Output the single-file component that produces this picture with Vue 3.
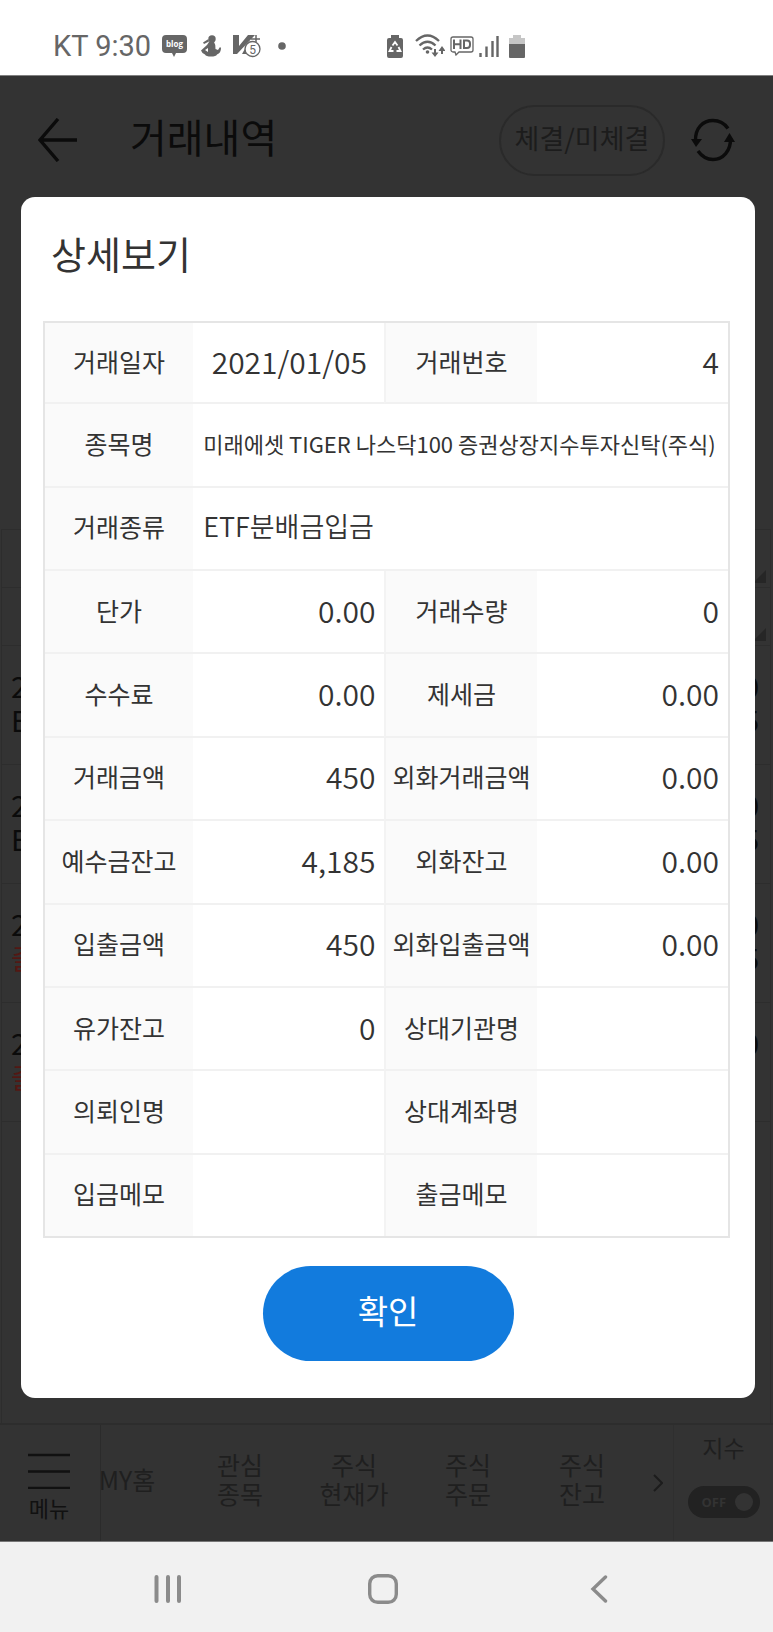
<script setup>
import { ref } from 'vue'

const rows = [
  [{ label: '거래일자', value: '2021/01/05', kind: 'date' }, { label: '거래번호', value: '4' }],
  [{ label: '종목명', value: '미래에셋 TIGER 나스닥100 증권상장지수투자신탁(주식)', kind: 'name' }],
  [{ label: '거래종류', value: 'ETF분배금입금', kind: 'type' }],
  [{ label: '단가', value: '0.00' }, { label: '거래수량', value: '0' }],
  [{ label: '수수료', value: '0.00' }, { label: '제세금', value: '0.00' }],
  [{ label: '거래금액', value: '450' }, { label: '외화거래금액', value: '0.00' }],
  [{ label: '예수금잔고', value: '4,185' }, { label: '외화잔고', value: '0.00' }],
  [{ label: '입출금액', value: '450' }, { label: '외화입출금액', value: '0.00' }],
  [{ label: '유가잔고', value: '0' }, { label: '상대기관명', value: '' }],
  [{ label: '의뢰인명', value: '' }, { label: '상대계좌명', value: '' }],
  [{ label: '입금메모', value: '' }, { label: '출금메모', value: '' }]
]

const history = [
  { left: ['2', 'E'], right: ['0', '5'] },
  { left: ['2', 'E'], right: ['0', '5'] },
  { left: ['2', '출'], right: ['0', '5'], withdrawal: true },
  { left: ['2', '출'], right: ['0', ''], withdrawal: true }
]

const tabs = [['MY홈'], ['관심', '종목'], ['주식', '현재가'], ['주식', '주문'], ['주식', '잔고']]
const indexOn = ref(false)
</script>

<template>
  <div class="phone">
    <header class="status">
      <div class="status-left">
        <span class="clock">KT 9:30</span>
        <svg class="i-blog" width="25" height="22" viewBox="0 0 25 22">
          <path d="M4 0h17a4 4 0 0 1 4 4v10a4 4 0 0 1-4 4h-7l-2 4-2-4H4a4 4 0 0 1-4-4V4a4 4 0 0 1 4-4z" fill="#666" />
          <text x="12.5" y="12" text-anchor="middle" font-family="Open Sans, sans-serif" font-weight="700" font-size="8" fill="#fff">blog</text>
        </svg>
        <svg class="i-person" width="20" height="22" viewBox="0 0 20 22">
          <circle cx="11" cy="4" r="3.7" fill="#666" />
          <path d="M7.500 4L2 7.500l1 1.500 5-2.500z" fill="#666" />
          <path d="M8 7h5q2 3 1.500 7l2.500 1 2-3 1 1q0 5-4 6.500-1 2-6 2-5 0-6-2-3-1-4-4l6-5.500z" fill="#666" />
          <path d="M4 15l3-2v4z" fill="#fff" />
        </svg>
        <svg class="i-vaccine" width="28" height="23" viewBox="0 0 28 23">
          <path d="M0 0h6v11L15 0h7L4 19H0z" fill="#666" />
          <path d="M9 19l4-7v7z" fill="#666" />
          <path d="M18 4h9M23 0v7" stroke="#666" stroke-width="1.5" />
          <circle cx="19.5" cy="14" r="7.5" fill="#fff" stroke="#666" stroke-width="1.3" />
          <text x="19.5" y="18.5" text-anchor="middle" font-family="Roboto, sans-serif" font-size="12" fill="#666">5</text>
        </svg>
        <svg width="8" height="8" viewBox="0 0 8 8"><circle cx="4" cy="4" r="3.8" fill="#666" /></svg>
      </div>
      <div class="status-right">
        <svg class="i-saver" width="16" height="23" viewBox="0 0 16 23">
          <path d="M4 0h8v3h2a2 2 0 0 1 2 2v16a2 2 0 0 1-2 2H2a2 2 0 0 1-2-2V5a2 2 0 0 1 2-2h2z" fill="#666" />
          <path d="M5.500 10.500L8 7l2.500 3.500M11.500 12l2 4h-4M6.500 16h-4l2-4" fill="none" stroke="#fff" stroke-width="1.800" />
        </svg>
        <svg class="i-wifi" width="30" height="24" viewBox="0 0 30 24">
          <g fill="none" stroke="#666" stroke-width="2.300">
            <path d="M1 7q11.500-11 23 0M4.500 11.500q8-7.500 16 0M8 15.500q4.500-4 9 0" />
            <path d="M20 15v6M27 20v-6" stroke-width="2" />
          </g>
          <circle cx="12.500" cy="18" r="1.800" fill="#666" />
          <path d="M16.500 18.500h7L20 23zM23.500 17h7L27 12z" fill="#666" />
        </svg>
        <svg class="i-hd" width="24" height="20" viewBox="0 0 24 20">
          <path d="M3 1h18a2 2 0 0 1 2 2v11a2 2 0 0 1-2 2H9l-3 3-1-3H3a2 2 0 0 1-2-2V3a2 2 0 0 1 2-2z" fill="none" stroke="#666" stroke-width="1.300" />
          <path d="M4 3.500v9.500M10.500 3.500v9.500M4 8.200h6.500M14 4.400h3q3 0 3 3v1.700q0 3-3 3h-3z" fill="none" stroke="#666" stroke-width="2" />
        </svg>
        <svg class="i-signal" width="20" height="22" viewBox="0 0 20 22">
          <path d="M1.500 22v-4M7.500 22V11.500M13.500 22V6M18.500 22V1" stroke="#666" stroke-width="2.400" />
        </svg>
        <svg width="16" height="23" viewBox="0 0 16 23">
          <path d="M4 0h8v3h4v7H0V3h4z" fill="#c6c6c6" />
          <path d="M0 9h16v13a1 1 0 0 1-1 1H1a1 1 0 0 1-1-1z" fill="#666" />
        </svg>
      </div>
    </header>

    <main class="app">
      <div class="topbar">
        <button class="icon-btn" aria-label="뒤로">
          <svg width="40" height="44" viewBox="0 0 40 44" fill="none" stroke="#0b0b0b" stroke-width="3.400">
            <path d="M20 1L2 22l18 21M2 22h37" />
          </svg>
        </button>
        <h1>거래내역</h1>
        <button class="pill">체결/미체결</button>
        <button class="icon-btn" aria-label="새로고침">
          <svg width="44" height="44" viewBox="0 0 44 44">
            <path d="M4.500 23C4 10 12 2.500 22 2.500q9.500 0 15 8M7 33q6 8.500 15 8.500C32 41.500 40 33 39.500 20" fill="none" stroke="#0b0b0b" stroke-width="3.400" />
            <path d="M0 21h11L5 29zM33 24h11L38.500 15z" fill="#0b0b0b" />
          </svg>
        </button>
      </div>

      <section class="list">
        <div class="head-row"><i class="corner"></i></div>
        <div class="head-row"><i class="corner"></i></div>
        <div v-for="(item, i) in history" :key="i" class="list-row" :class="{ red: item.withdrawal }">
          <div class="cell"><span>{{ item.left[0] }}</span><span class="second">{{ item.left[1] }}</span></div>
          <div class="cell"><span>{{ item.right[0] }}</span><span>{{ item.right[1] }}</span></div>
        </div>
      </section>

      <nav class="bottom">
        <button class="menu">
          <svg width="42" height="36" viewBox="0 0 42 36" stroke="#111" stroke-width="2.500"><path d="M0 2h42M0 18.500h42M0 35h42" /></svg>
          <span>메뉴</span>
        </button>
        <div class="strip">
          <a v-for="(tab, i) in tabs" :key="i" href="#" class="tab">
            <span v-for="line in tab" :key="line">{{ line }}</span>
          </a>
        </div>
        <button class="more" aria-label="더보기">
          <svg width="10" height="18" viewBox="0 0 10 18" fill="none" stroke="#1c1c1c" stroke-width="2"><path d="M1 1l8 8-8 8" /></svg>
        </button>
        <label class="index">
          <span>지수</span>
          <span class="track">
            <input v-model="indexOn" type="checkbox">
            <span>OFF</span><i class="knob"></i>
          </span>
        </label>
      </nav>

      <section class="modal" role="dialog" aria-labelledby="detail-title">
        <h2 id="detail-title">상세보기</h2>
        <div class="details">
          <table>
            <colgroup><col class="c-first"><col class="c-value"><col class="c-second"><col class="c-value"></colgroup>
            <tbody>
              <tr v-for="(row, r) in rows" :key="r">
                <template v-for="cell in row" :key="cell.label">
                  <th scope="row">{{ cell.label }}</th>
                  <td :class="cell.kind" :colspan="row.length === 1 ? 3 : 1">{{ cell.value }}</td>
                </template>
              </tr>
            </tbody>
          </table>
        </div>
        <button class="confirm">확인</button>
      </section>
    </main>

    <nav class="system">
      <button class="icon-btn" aria-label="최근 앱">
        <svg width="28" height="28" viewBox="0 0 28 28" stroke="#8b8b8b" stroke-width="4" stroke-linecap="round"><path d="M2.500 2v24M14 2v24M25 2v24" /></svg>
      </button>
      <button class="icon-btn" aria-label="홈">
        <svg width="30" height="30" viewBox="0 0 30 30"><rect x="1.700" y="1.700" width="26.600" height="26.600" rx="8" fill="none" stroke="#8b8b8b" stroke-width="3.400" /></svg>
      </button>
      <button class="icon-btn" aria-label="이전">
        <svg width="18" height="28" viewBox="0 0 18 28" fill="none" stroke="#8b8b8b" stroke-width="3.400" stroke-linecap="round"><path d="M15.500 2L3 14l12.500 12" /></svg>
      </button>
    </nav>
  </div>
</template>

<style>
body {
  margin: 0;
}
</style>

<style scoped>
* {
  box-sizing: border-box;
}
.phone {
  display: flex;
  flex-direction: column;
  min-height: 100vh;
  font-family: "Noto Sans CJK KR", sans-serif;
  color: #333;
  background: #fff;
}
button {
  padding: 0;
  border: 0;
  background: none;
  font: inherit;
  color: inherit;
}
svg {
  display: block;
}
.status {
  display: flex;
  height: 75px;
  padding: 17px 0 0 53px;
}
.status-left,
.status-right {
  display: flex;
  align-items: center;
}
.status-left {
  width: 334px;
}
.clock {
  width: 109px;
  font: 29px/36px Roboto, sans-serif;
  color: #666;
}
.i-blog {
  margin-right: 14px;
}
.i-person {
  margin-right: 12px;
}
.i-vaccine {
  margin-right: 17px;
}
.i-saver {
  margin-right: 12px;
}
.i-wifi,
.i-hd {
  margin-right: 5px;
}
.i-signal {
  margin-right: 10px;
}
.app {
  position: relative;
  display: flex;
  flex: 1;
  flex-direction: column;
  background: #333;
  border-top: 1px solid #808080;
  border-bottom: 1px solid #777;
}
.topbar {
  display: flex;
  align-items: center;
  height: 130px;
  padding: 0 38px 2px;
}
.topbar h1 {
  flex: 1;
  margin: 0 0 0 52px;
  padding-bottom: 8px;
  font-size: 40px;
  line-height: 56px;
  font-weight: 400;
  color: #0b0b0b;
}
.pill {
  width: 166px;
  height: 71px;
  margin-right: 26px;
  padding-bottom: 6px;
  border: 2px solid #2a2a2a;
  border-radius: 36px;
  font-size: 27px;
  color: #1c1c1c;
}
.list {
  flex: 1;
  margin: 323px 2px 0 1px;
  border: 1px solid #2d2d2d;
  border-bottom: 0;
}
.head-row {
  display: flex;
  align-items: flex-end;
  justify-content: flex-end;
  height: 58px;
  padding: 4px;
  border-bottom: 1px solid #2d2d2d;
}
.corner {
  border-left: 13px solid transparent;
  border-bottom: 13px solid #262626;
}
.list-row {
  display: flex;
  justify-content: space-between;
  height: 119px;
  padding: 22px 11px 0 9px;
  border-bottom: 1px solid #2d2d2d;
  font-size: 29px;
  line-height: 34px;
  color: #0b0b0b;
}
.cell {
  display: flex;
  flex-direction: column;
}
.red .second {
  color: #541713;
}
.bottom {
  display: flex;
  height: 118px;
  border-top: 2px solid #2d2d2d;
  font-size: 25px;
  line-height: 29px;
  color: #1f1f1f;
}
.menu {
  display: flex;
  flex-direction: column;
  align-items: center;
  width: 101px;
  padding: 28px 2px 0 0;
  border-right: 1px solid #2b2b2b;
  font-size: 22px;
  color: #111;
}
.menu span {
  margin-top: 4px;
}
.strip {
  display: flex;
  flex: 1;
  overflow: hidden;
}
.tab {
  display: flex;
  flex: 0 0 114px;
  flex-direction: column;
  align-items: center;
  justify-content: center;
  padding-bottom: 8px;
  color: inherit;
  text-decoration: none;
}
.tab:first-child {
  flex-basis: 112px;
  margin-left: -30px;
}
.more {
  width: 30px;
}
.more svg {
  margin: 0 auto;
}
.index {
  display: flex;
  flex-direction: column;
  align-items: center;
  width: 100px;
  padding-top: 8px;
  border-left: 1px solid #2f2f2f;
  font-size: 23px;
}
.track {
  position: relative;
  display: flex;
  align-items: center;
  justify-content: space-between;
  width: 72px;
  height: 32px;
  margin-top: 24px;
  padding: 0 7px 0 14px;
  border-radius: 16px;
  background: #222;
  color: #333;
  font: bold 13px "Noto Sans", sans-serif;
}
.track input {
  position: absolute;
  inset: 0;
  margin: 0;
  opacity: 0;
}
.knob {
  width: 18px;
  height: 18px;
  border-radius: 50%;
  background: #333;
}
.modal {
  position: absolute;
  top: 121px;
  left: 21px;
  right: 18px;
  padding-bottom: 37px;
  border-radius: 14px;
  background: #fff;
}
h2 {
  margin: 0 0 12px;
  padding-left: 30px;
  font-size: 38px;
  line-height: 112px;
  font-weight: 400;
}
.details {
  padding: 0 25px 0 22px;
}
table {
  width: 100%;
  height: 917px;
  table-layout: fixed;
  border: 2px solid #e5e5e5;
  border-collapse: separate;
  border-spacing: 0;
}
.c-first {
  width: 21.7%;
}
.c-second {
  width: 22.3%;
}
.c-value {
  width: 28%;
}
th,
td {
  height: 83px;
  padding: 0 0 4px;
  border-bottom: 2px solid #f1f1f1;
  line-height: 40px;
}
tr:first-child > *,
tr:last-child > * {
  height: 81px;
}
tr:last-child > * {
  border-bottom: 0;
}
th {
  background: #fafafa;
  font-size: 25px;
  font-weight: 400;
  white-space: nowrap;
}
td + th {
  border-left: 2px solid #f3f3f3;
}
td {
  padding: 0 9px 4px 10px;
  font-size: 30px;
  font-weight: 350;
  text-align: right;
}
.date {
  text-align: center;
}
.name,
.type {
  text-align: left;
}
.name {
  font-size: 22px;
  font-weight: 400;
  white-space: nowrap;
}
.type {
  font-size: 27px;
}
.confirm {
  display: block;
  width: 251px;
  height: 95px;
  margin: 28px auto 0;
  padding-bottom: 8px;
  border-radius: 48px;
  background: #127bdd;
  color: #fff;
  font-size: 33px;
}
.system {
  display: grid;
  grid-template-columns: repeat(3, 1fr);
  align-items: center;
  height: 90px;
  padding: 3px 66px 0 60px;
  background: #f1f1f1;
}
.system .icon-btn {
  justify-self: center;
}
</style>
